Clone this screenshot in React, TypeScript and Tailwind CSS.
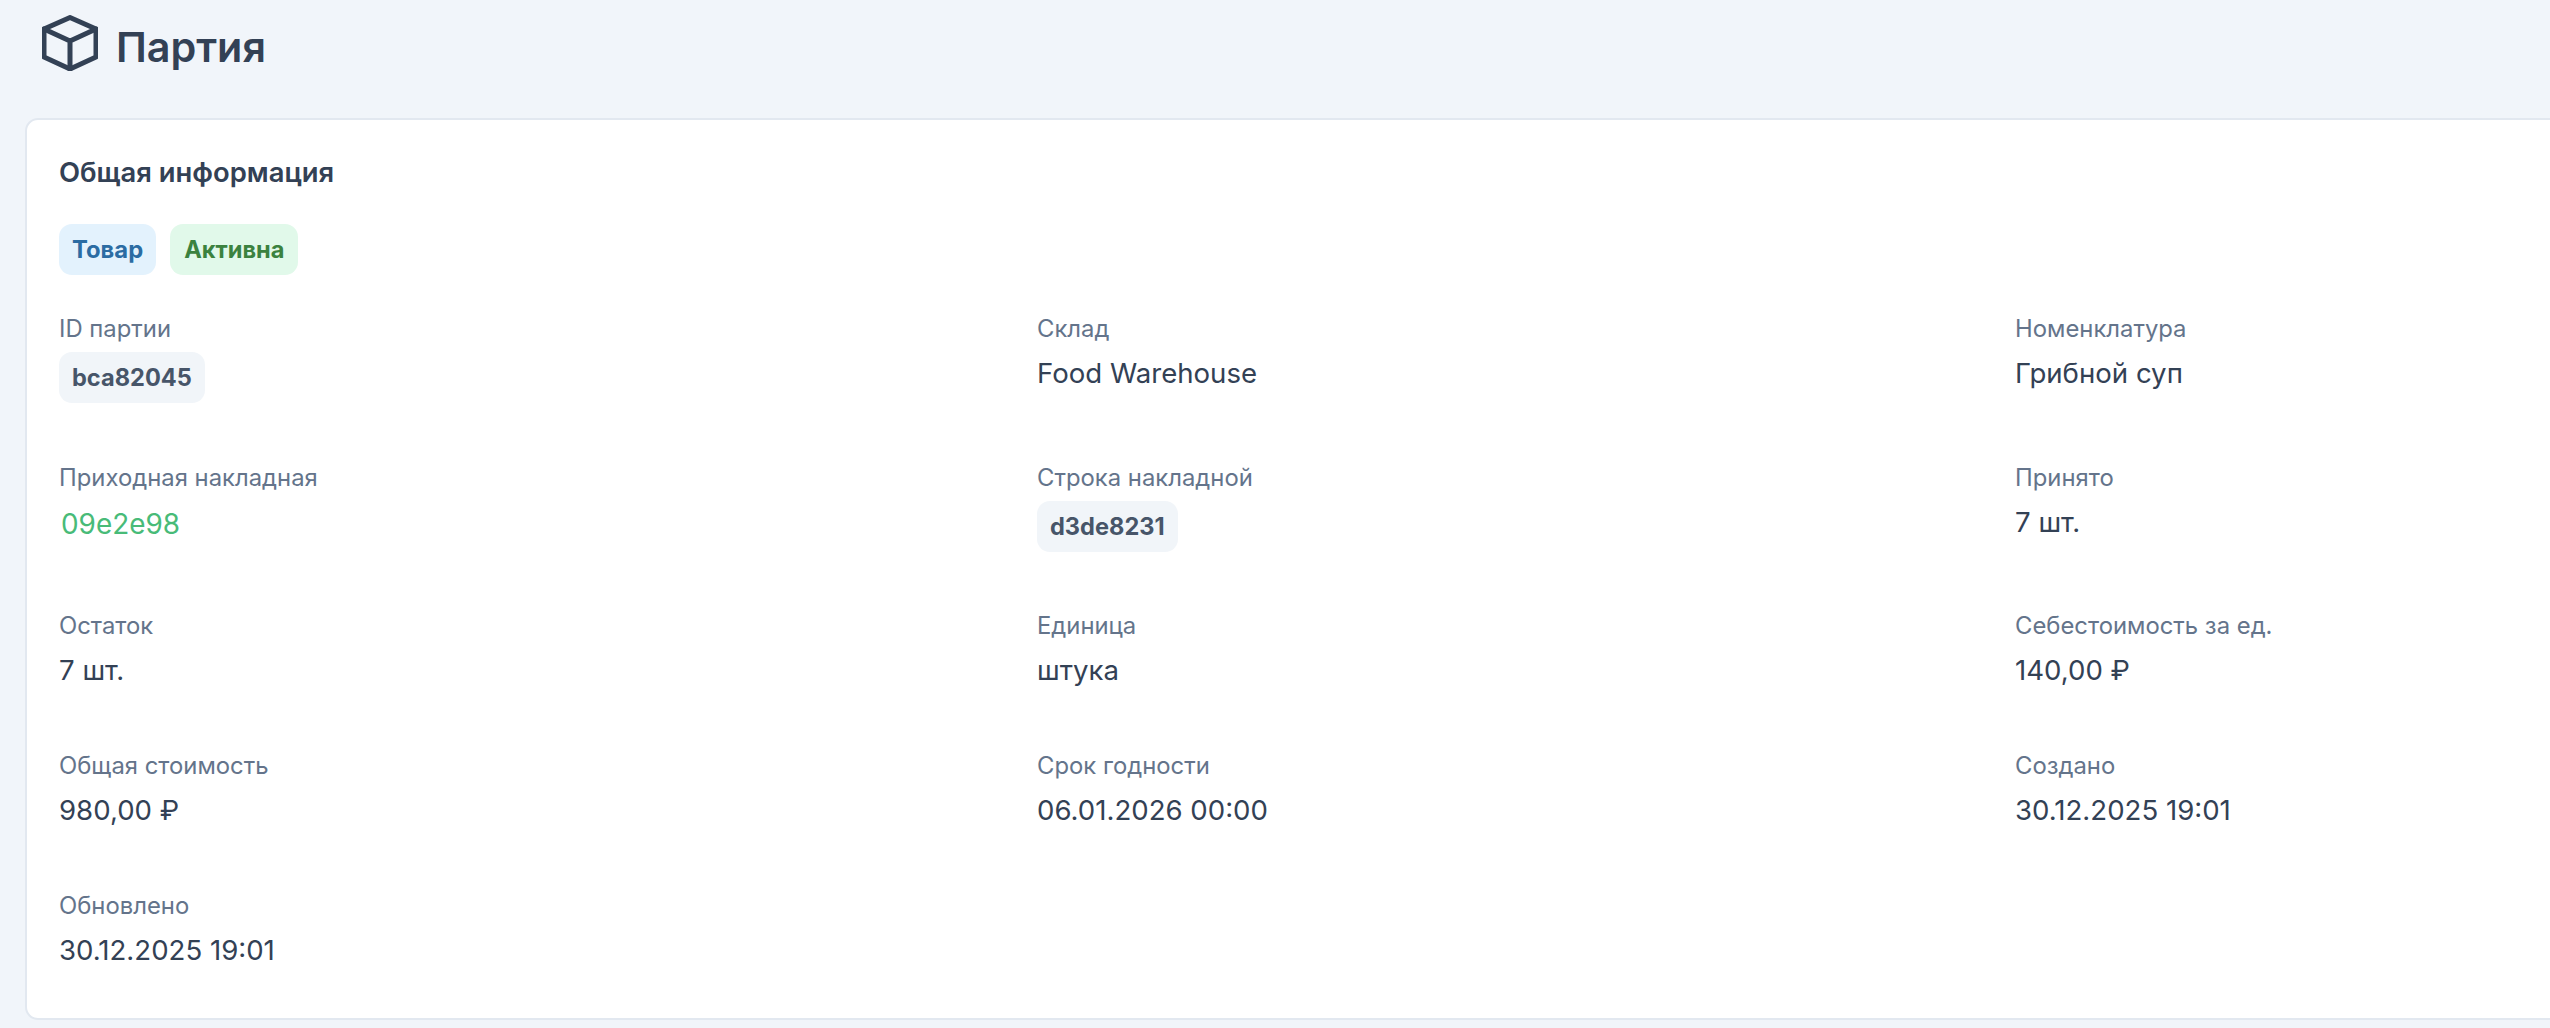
const Label = ({ children }: { children: React.ReactNode }) => (
  <div className="text-[23.85px] leading-[36px] text-[#64748b]">{children}</div>
);
const Value = ({ children }: { children: React.ReactNode }) => (
  <div className="mt-[6px] text-[27.6px] leading-[40px] text-[#334155]">{children}</div>
);
const Pill = ({ children }: { children: React.ReactNode }) => (
  <div className="mt-[5px] inline-flex h-[51px] items-center rounded-[13px] bg-[#f1f5f9] px-[13px] text-[23.6px] font-bold text-[#475569]">{children}</div>
);
const Field = ({ label, children }: { label: string; children: React.ReactNode }) => (
  <div className="flex flex-col items-start"><Label>{label}</Label>{children}</div>
);
export default function App() {
  return (
    <div className="h-screen w-full overflow-hidden bg-[#f1f5fa] font-['Inter',sans-serif]">
      <div className="flex h-[95px] items-start gap-[18px] pl-[42px] pt-[15px]">
        <svg width="56" height="56" viewBox="0 0 56 56" fill="none" stroke="#334155" strokeWidth="5" strokeLinejoin="round" strokeLinecap="round">
          <path d="M28 2.5 54 14V42L28 54 2 42V14Z" />
          <path d="M2 14 28 26 54 14M28 26V54" />
        </svg>
        <h1 className="mt-[4px] text-[41.3px] font-semibold leading-[56px] text-[#334155]">Партия</h1>
      </div>
      <div className="ml-[25px] mt-[23px] h-[902px] w-[2990px] rounded-[13px] border-2 border-[#e2e8f0] bg-white pl-[32px] pt-[34px]">
        <h2 className="text-[27.4px] font-semibold leading-[36px] text-[#334155]">Общая информация</h2>
        <div className="mt-[34px] flex gap-[14px]">
          <span className="flex h-[51px] items-center rounded-[13px] bg-[#e3f2fd] px-[13px] text-[23.8px] font-bold text-[#2b6ca3]">Товар</span>
          <span className="flex h-[51px] items-center rounded-[13px] bg-[#e1f9ea] px-[14px] text-[23.6px] font-bold text-[#3b823f]">Активна</span>
        </div>
        <div className="mt-[36px] grid grid-cols-[978px_978px_978px]">
          <div className="h-[149px]"><Field label="ID партии"><Pill>bca82045</Pill></Field></div>
          <div className="h-[149px]"><Field label="Склад"><Value>Food Warehouse</Value></Field></div>
          <div className="h-[149px]"><Field label="Номенклатура"><Value>Грибной суп</Value></Field></div>
          <div className="h-[148px]"><Field label="Приходная накладная"><Value><span className="relative top-[2px] pl-[2px] text-[27.9px] text-[#48bb78]">09e2e98</span></Value></Field></div>
          <div className="h-[148px]"><Field label="Строка накладной"><Pill>d3de8231</Pill></Field></div>
          <div className="h-[148px]"><Field label="Принято"><Value>7 шт.</Value></Field></div>
          <div className="h-[140px]"><Field label="Остаток"><Value>7 шт.</Value></Field></div>
          <div className="h-[140px]"><Field label="Единица"><Value>штука</Value></Field></div>
          <div className="h-[140px]"><Field label="Себестоимость за ед."><Value>140,00 ₽</Value></Field></div>
          <div className="h-[140px]"><Field label="Общая стоимость"><Value>980,00 ₽</Value></Field></div>
          <div className="h-[140px]"><Field label="Срок годности"><Value>06.01.2026 00:00</Value></Field></div>
          <div className="h-[140px]"><Field label="Создано"><Value>30.12.2025 19:01</Value></Field></div>
          <div><Field label="Обновлено"><Value>30.12.2025 19:01</Value></Field></div>
        </div>
      </div>
    </div>
  );
}
